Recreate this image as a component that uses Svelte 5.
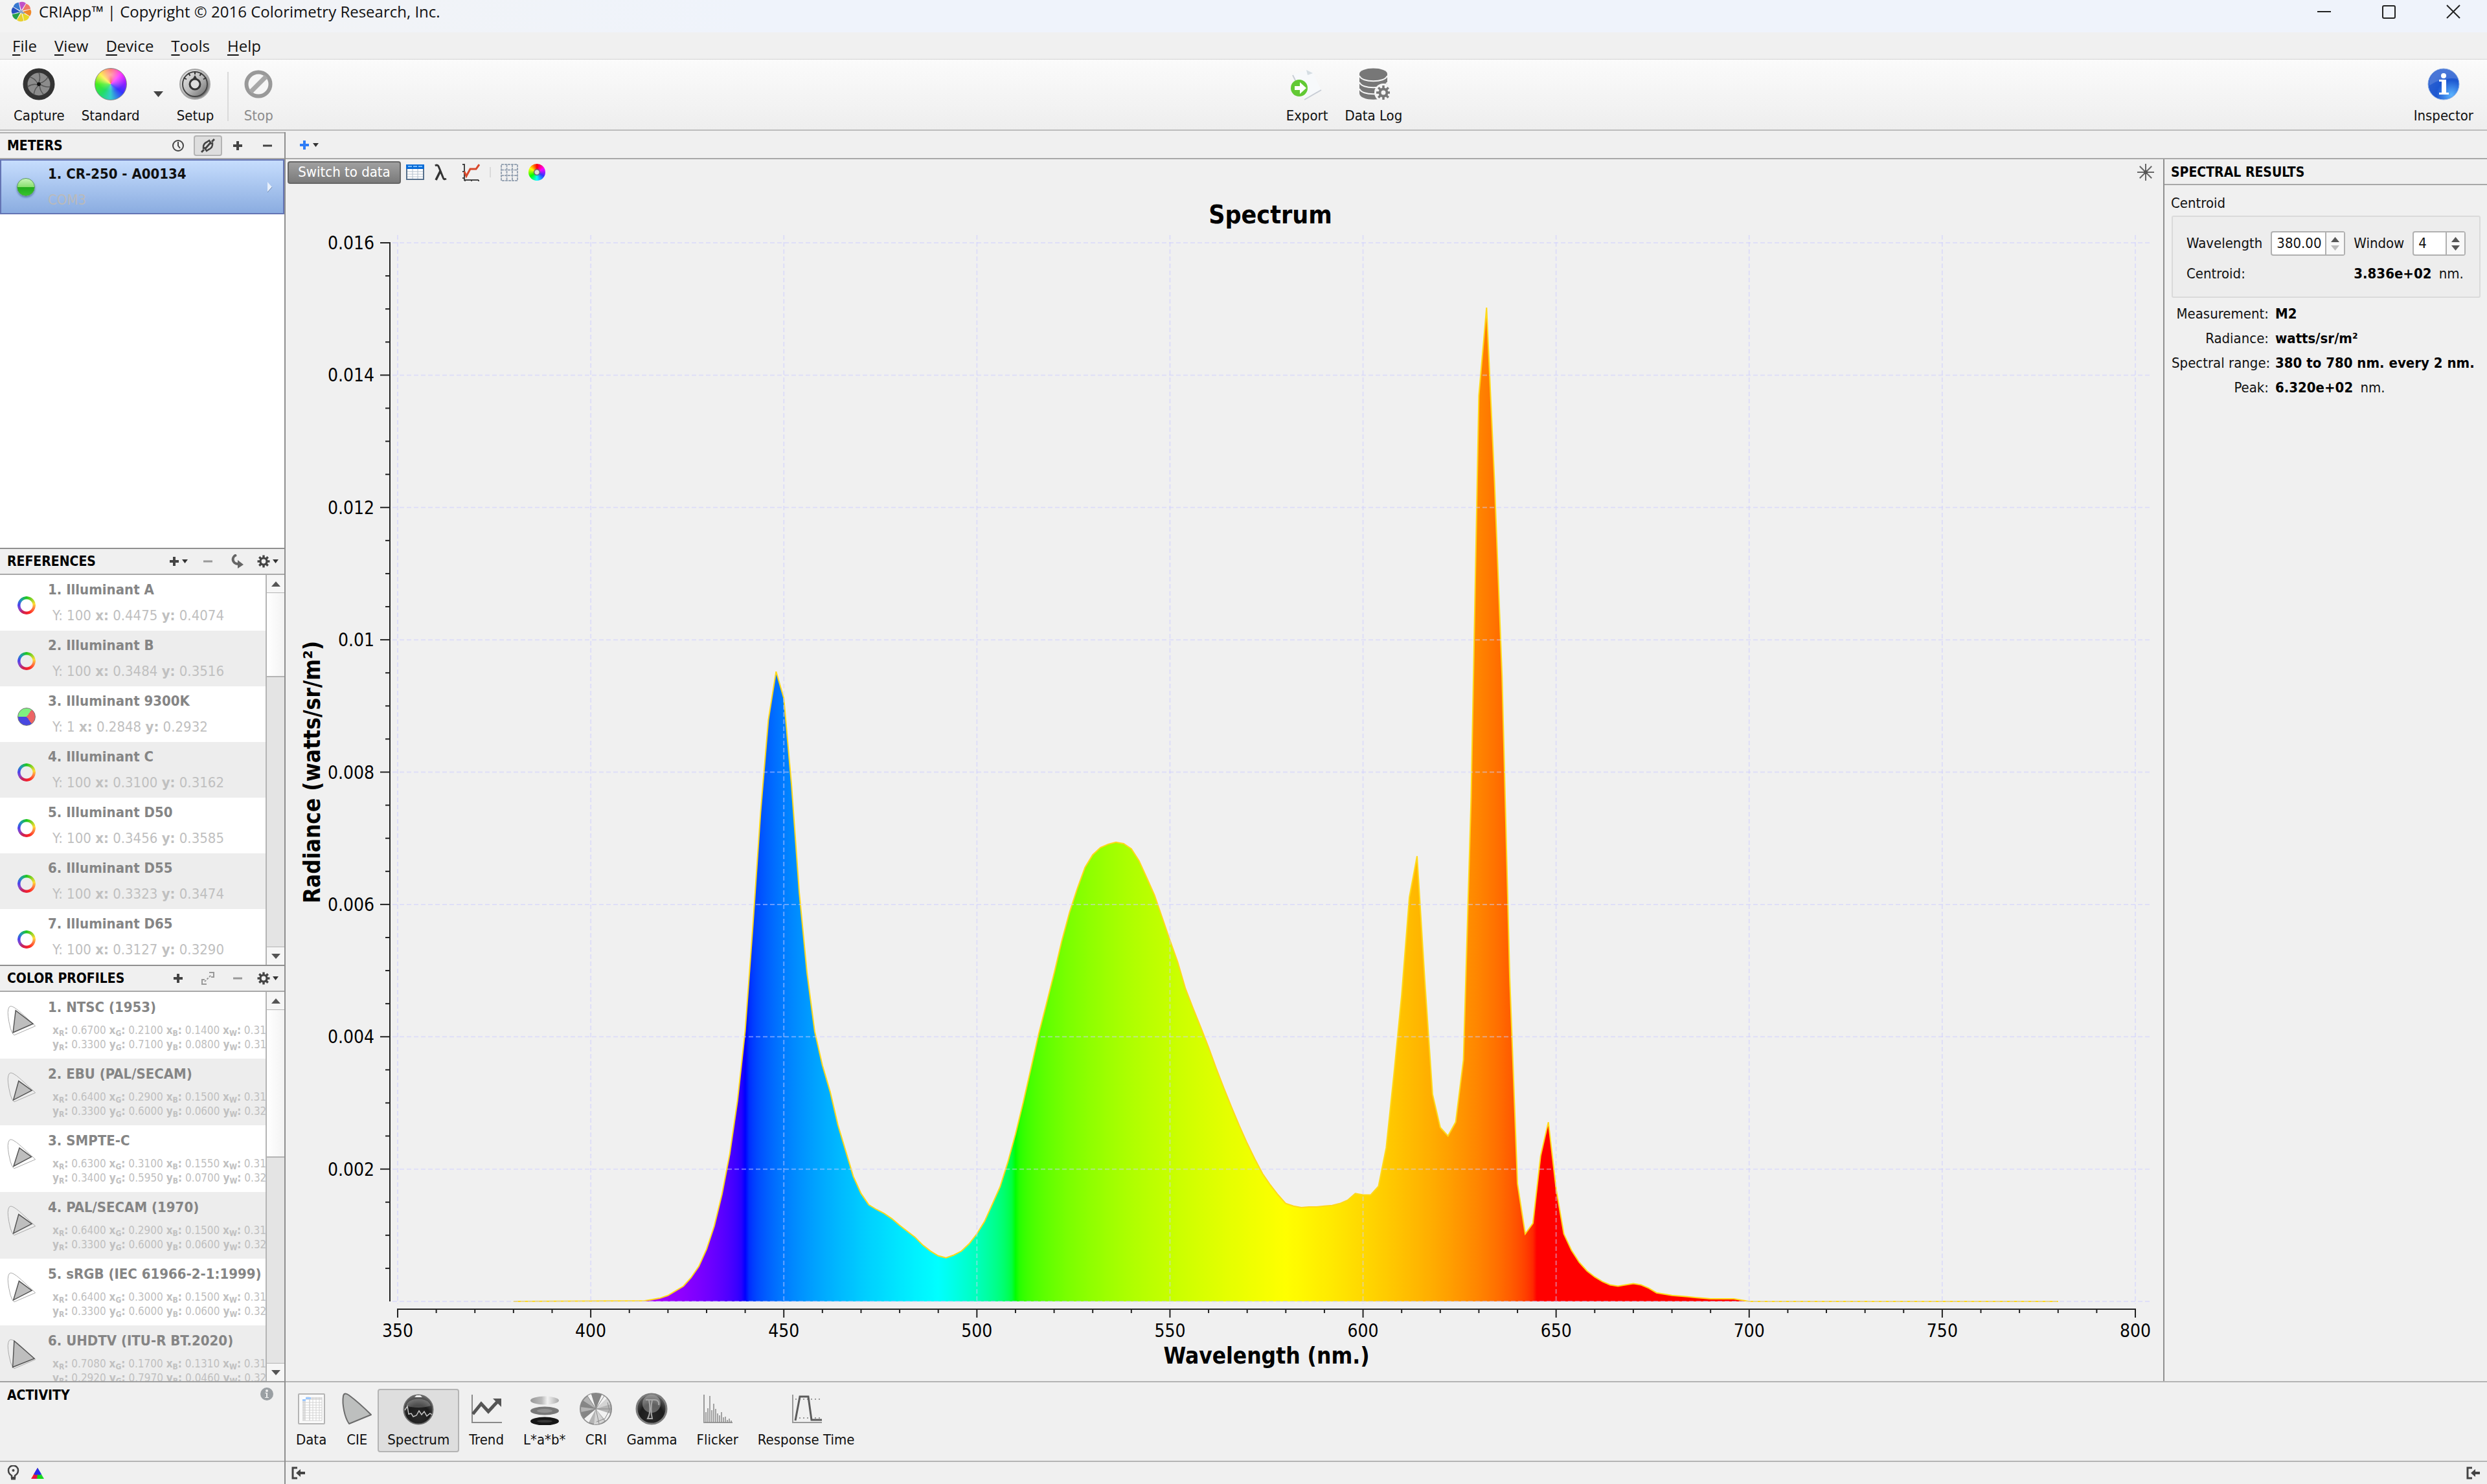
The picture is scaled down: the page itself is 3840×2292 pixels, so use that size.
<script lang="ts">
  type Row = { name: string; lum: string; x: string; y: string; mixed?: boolean };
  type Profile = { name: string; x: string[]; y: string[] };

  const menus = ['File', 'View', 'Device', 'Tools', 'Help'];

  const references: Row[] = [
    { name: 'Illuminant A', lum: '100', x: '0.4475', y: '0.4074' },
    { name: 'Illuminant B', lum: '100', x: '0.3484', y: '0.3516' },
    { name: 'Illuminant 9300K', lum: '1', x: '0.2848', y: '0.2932', mixed: true },
    { name: 'Illuminant C', lum: '100', x: '0.3100', y: '0.3162' },
    { name: 'Illuminant D50', lum: '100', x: '0.3456', y: '0.3585' },
    { name: 'Illuminant D55', lum: '100', x: '0.3323', y: '0.3474' },
    { name: 'Illuminant D65', lum: '100', x: '0.3127', y: '0.3290' },
  ];

  const profiles: Profile[] = [
    { name: 'NTSC (1953)', x: ['0.6700', '0.2100', '0.1400', '0.3101'], y: ['0.3300', '0.7100', '0.0800', '0.3162'] },
    { name: 'EBU (PAL/SECAM)', x: ['0.6400', '0.2900', '0.1500', '0.3127'], y: ['0.3300', '0.6000', '0.0600', '0.3290'] },
    { name: 'SMPTE-C', x: ['0.6300', '0.3100', '0.1550', '0.3127'], y: ['0.3400', '0.5950', '0.0700', '0.3290'] },
    { name: 'PAL/SECAM (1970)', x: ['0.6400', '0.2900', '0.1500', '0.3127'], y: ['0.3300', '0.6000', '0.0600', '0.3290'] },
    { name: 'sRGB (IEC 61966-2-1:1999)', x: ['0.6400', '0.3000', '0.1500', '0.3127'], y: ['0.3300', '0.6000', '0.0600', '0.3290'] },
    { name: 'UHDTV (ITU-R BT.2020)', x: ['0.7080', '0.1700', '0.1310', '0.3127'], y: ['0.2920', '0.7970', '0.0460', '0.3290'] },
  ];
  const primaries = ['R', 'G', 'B', 'W'];

  const views = ['Data', 'CIE', 'Spectrum', 'Trend', 'L*a*b*', 'CRI', 'Gamma', 'Flicker', 'Response Time'];
  let activeView = $state('Spectrum');
  let wavelength = $state('380.00');
  let windowSize = $state('4');

  // radiance in 1e-5 W/sr/m², 2 nm steps starting at 414 nm
  const samples = [
    1, 3, 5, 9, 16, 23, 36, 53, 79, 114, 162, 223, 303, 409, 568, 739, 879, 952, 912, 781,
    618, 497, 408, 357, 317, 267, 228, 189, 163, 146, 139, 133, 125, 115, 106, 97, 85, 76, 69, 66,
    70, 76, 87, 102, 121, 147, 173, 210, 253, 301, 352, 404, 450, 496, 545, 588, 624, 656, 675, 686,
    691, 694, 692, 684, 666, 640, 614, 580, 546, 513, 473, 443, 414, 384, 352, 322, 293, 265, 239, 215,
    193, 176, 161, 148, 144, 142, 143, 143, 144, 145, 148, 153, 163, 161, 161, 174, 232, 344, 463, 611,
    673, 484, 313, 263, 250, 271, 365, 763, 1369, 1502, 1245, 945, 489, 178, 102, 118, 220, 271, 170, 102,
    77, 59, 46, 37, 30, 25, 23, 25, 27, 25, 20, 13, 11, 9, 8, 7, 6, 5, 4, 4, 4, 4, 2,
  ];

  let w = $state(2899);
  let h = $state(1846);
  const left = 173;
  const right = 43;
  const top = 89;
  const bottom = 123;

  const px = (nm: number) => left + ((nm - 350) / 450) * (w - left - right);
  const py = (v: number) => h - bottom - (v / 1600) * (h - top - bottom);

  const curve = $derived(samples.map((v, i) => `${px(414 + i * 2).toFixed(1)},${py(v).toFixed(1)}`).join(' L'));
  const outline = $derived(`M${px(380)},${py(0)} L${curve} L${px(700)},${py(0)} L${px(780)},${py(0)}`);
  const area = $derived(`M${px(412)},${py(0)} L${curve} L${px(700)},${py(0)} Z`);

  const xTicks = Array.from({ length: 46 }, (_, i) => 350 + i * 10);
  const yTicks = Array.from({ length: 32 }, (_, i) => 50 + i * 50);
  const xMajor = xTicks.filter((t) => t % 50 === 0);
  const yMajor = [0, ...yTicks.filter((t) => t % 200 === 0)];

  function colorAt(nm: number) {
    const g = (v: number) => Math.round(255 * Math.pow(Math.min(1, Math.max(0, v)), 0.45));
    if (nm < 440) return `rgb(${g((440 - nm) / 60)},0,255)`;
    if (nm < 490) return `rgb(0,${g((nm - 440) / 50)},255)`;
    if (nm < 510) return `rgb(0,255,${g((510 - nm) / 20)})`;
    if (nm < 580) return `rgb(${g((nm - 510) / 70)},255,0)`;
    if (nm < 645) return `rgb(255,${g((645 - nm) / 65)},0)`;
    return 'rgb(255,0,0)';
  }
  const stops = Array.from({ length: 236 }, (_, i) => 410 + i);

  // spectral locus of the CIE 1931 diagram
  const locus = [
    [0.174, 0.005], [0.144, 0.03], [0.11, 0.087], [0.07, 0.2], [0.03, 0.4], [0.008, 0.55], [0.004, 0.66],
    [0.014, 0.75], [0.04, 0.812], [0.075, 0.834], [0.115, 0.826], [0.155, 0.806], [0.23, 0.754], [0.302, 0.692],
    [0.373, 0.624], [0.445, 0.554], [0.512, 0.487], [0.575, 0.424], [0.627, 0.372], [0.735, 0.265],
  ];
  const cie = (x: number, y: number) => `${(1 + x * 58).toFixed(1)},${(47 - y * 54).toFixed(1)}`;
  const locusPoints = locus.map(([x, y]) => cie(x, y)).join(' ');
  const gamut = (p: Profile) => [0, 1, 2].map((i) => cie(+p.x[i], +p.y[i])).join(' ');

  const rays = (n: number) => Array.from({ length: n }, (_, i) => (i * 360) / n);
</script>

{#snippet plus(color: string)}
  <svg width="16" height="16" viewBox="0 0 16 16"><path d="M8 1v14M1 8h14" stroke={color} stroke-width="4" /></svg>
{/snippet}

{#snippet minus(color: string)}
  <svg width="16" height="16" viewBox="0 0 16 16"><path d="M1 8h14" stroke={color} stroke-width="3" /></svg>
{/snippet}

{#snippet caret()}
  <svg width="9" height="6" viewBox="0 0 9 6"><path d="M0 0h9L4.500 6z" fill="#333" /></svg>
{/snippet}

{#snippet gear()}
  <svg width="20" height="20" viewBox="-10 -10 20 20">
    {#each rays(8) as a}<path d="M0-5V-9.500" stroke="#444" stroke-width="3.400" transform="rotate({a})" />{/each}
    <circle r="5" fill="none" stroke="#444" stroke-width="3.200" />
  </svg>
{/snippet}

{#snippet scrollbar(size: string)}
  <div class="scrollbar">
    <button class="arrow" aria-label="Scroll up"><svg width="14" height="8"><path d="M0 8h14L7 0z" fill="#555" /></svg></button>
    <div class="thumb {size}"></div>
    <div class="track"></div>
    <button class="arrow down" aria-label="Scroll down"><svg width="14" height="8"><path d="M0 0h14L7 8z" fill="#555" /></svg></button>
  </div>
{/snippet}

{#snippet dock()}
  <svg width="22" height="20" viewBox="0 0 22 20">
    <path d="M9 2H2v16h7" fill="none" stroke="#444" stroke-width="3" />
    <path d="M7 10l7-6v4h7v4h-7v4z" fill="#444" />
  </svg>
{/snippet}

{#snippet viewIcon(name: string)}
  <svg class="view-icon" viewBox="0 0 50 50">
    {#if name === 'Data'}
      <rect x="5" y="2" width="40" height="46" rx="1" fill="#fafafa" stroke="#b4b4b4" stroke-width="2" />
      <path d="M11 7h30v36H11z" fill="#fff" />
      <path d="M11 12h5v31h-5zM16 7h25v4H16z" fill="#dedede" />
      <path d="M17 7h5v36M22 7v36M27 7v36M32 7v36M37 7v36M11 15h30M11 19h30M11 23h30M11 27h30M11 31h30M11 35h30M11 39h30M11 43h30M41 7v36" fill="none" stroke="#d2d2d2" />
      <path d="M11 10h5v3h-5zM16 7h8v3h-8z" fill="#9cc8ff" />
    {:else if name === 'CIE'}
      <path d="M13 48C6 38 2 18 4 5C5 0 9 1 13 4C25 13 37 24 47 34Z" fill="#bdbfbe" stroke="#6b6b6b" stroke-width="2" stroke-linejoin="round" />
    {:else if name === 'Spectrum'}
      <circle cx="25" cy="26" r="22.500" fill="url(#ball)" stroke="#6a6a6a" stroke-width="2" />
      <path d="M6 20C10 6 40 6 44 20C34 24 16 24 6 20Z" fill="#fff" opacity=".22" />
      <path d="M19 7l3-3h6l3 3z" fill="#eee" />
      <path d="M4 27l4-6 2 12 4-1 3 5 5-2 4-7 4 6 4-5 4 7 5-4 3 2" fill="none" stroke="#c4c4c4" stroke-width="1.500" />
    {:else if name === 'Trend'}
      <path d="M3 3v43h46" fill="none" stroke="#8a8a8a" stroke-width="2" />
      <path d="M4 33L17 17L28 29L42 14" fill="none" stroke="#555" stroke-width="5" />
      <path d="M35 9h13v13z" fill="#555" />
    {:else if name === 'L*a*b*'}
      <ellipse cx="25" cy="12" rx="22" ry="6.500" fill="url(#shine)" />
      <ellipse cx="25" cy="28" rx="22" ry="6.500" fill="#777" /><ellipse cx="25" cy="28" rx="12" ry="3" fill="#929292" />
      <ellipse cx="25" cy="44" rx="22" ry="6.500" fill="#161616" /><ellipse cx="25" cy="44" rx="12" ry="2" fill="#383838" />
    {:else if name === 'CRI'}
      <circle cx="25" cy="25" r="24" fill="#b4b4b4" stroke="#8c8c8c" stroke-width="2" />
      <path d="M25 25L12 5A24 24 0 0 1 18 2Z M25 25L34 3A24 24 0 0 1 42 9Z M25 25L47 32A24 24 0 0 1 40 43Z M25 25L14 46A24 24 0 0 1 7 40Z" fill="#f2f2f2" />
      <path d="M25 25L18 2A24 24 0 0 1 34 3Z M25 25L1 22A24 24 0 0 1 5 12Z M25 25L7 40A24 24 0 0 1 2 30Z" fill="#858585" />
      <path d="M25 25L38 44A24 24 0 0 1 22 49Z M25 25L42 9A24 24 0 0 1 47 18Z" fill="#d4d4d4" />
      <path d="M25 25L12 5M25 25L3 15M25 25L49 25M25 25L30 48M25 25L38 5M25 25L2 32M43 15l3 12-7 13-13 5" fill="none" stroke="#8a8a8a" />
    {:else if name === 'Gamma'}
      <circle cx="25" cy="25" r="23" fill="url(#ball)" stroke="#7c7c7c" stroke-width="3" />
      <circle cx="25" cy="17" r="14" fill="#fff" opacity=".3" />
      <path d="M16 11h14c5 0 7 4 6 8M21 11c2 10 2 22-2 29h7c-2-9-2-20 0-29" fill="none" stroke="#a8a8a8" stroke-width="2" />
    {:else if name === 'Flicker'}
      <path d="M4 3v43h44" fill="none" stroke="#9a9a9a" stroke-width="2" />
      <path d="M7 46V30M10 46V24M13 46V5M16 46V27M19 46V17M22 46V25M25 46V32M28 46V35M31 46V30M34 46V38M37 46V37M40 46V42M43 46V40M46 46V43" stroke="#888" stroke-width="1.500" />
    {:else}
      <path d="M4 3v43h45" fill="none" stroke="#999" stroke-width="2" />
      <path d="M8 10h42M8 39h42" stroke="#999" stroke-width="2" stroke-dasharray="2 4" />
      <path d="M8 43L15 6H28L33 42H49" fill="none" stroke="#5c5c5c" stroke-width="3" />
    {/if}
  </svg>
{/snippet}

<div class="app">
  <header class="titlebar">
    <svg width="32" height="32" viewBox="-16 -16 32 32">
      {#each ['#c050c8', '#f07868', '#f08828', '#e8d828', '#e8d030', '#28a048', '#2850c0', '#3878d0'] as c, i}
        <path d="M0-2L-3.500-14Q2-17 7-13Z" fill={c} transform="rotate({i * 45})" />
      {/each}
      <path d="M-5 1h4v-3M1-2v4h4" fill="none" stroke="#6a8fc0" stroke-width="1.500" />
    </svg>
    <span class="caption">CRIApp™ | Copyright © 2016 Colorimetry Research, Inc.</span>
    <button aria-label="Minimize"><svg width="24" height="24"><path d="M2 12h21" stroke="#222" stroke-width="2" /></svg></button>
    <button aria-label="Maximize"><svg width="24" height="24"><rect x="3" y="3" width="19" height="19" rx="2" fill="none" stroke="#222" stroke-width="2" /></svg></button>
    <button aria-label="Close"><svg width="24" height="24"><path d="M2 2l20 20M22 2L2 22" stroke="#222" stroke-width="2" /></svg></button>
  </header>

  <nav class="menubar">
    {#each menus as m}<button><u>{m[0]}</u>{m.slice(1)}</button>{/each}
  </nav>

  <div class="toolbar">
    <div class="tools">
      <button class="tool">
        <svg viewBox="-25 -25 50 50">
          <circle r="21" fill="#8c8c8c" stroke="#333" stroke-width="7" />
          {#each rays(7) as a}<path d="M0-3Q3-10 0-18" fill="none" stroke="#555" stroke-width="1.500" transform="rotate({a})" />{/each}
          <circle r="3" fill="#111" />
        </svg>
        Capture
      </button>
      <div class="split">
        <button class="tool"><span class="wheel big"></span>Standard</button>
        <button class="drop" aria-label="Standard modes"><svg width="15" height="9"><path d="M0 0h15L7.500 9z" fill="#444" /></svg></button>
      </div>
      <button class="tool">
        <svg viewBox="-25 -25 50 50">
          <circle r="23" fill="url(#metal)" stroke="#a5a5a5" stroke-width="2" />
          <circle r="19" fill="none" stroke="#444" stroke-width="2" />
          {#each [-60, -30, 0, 30, 60] as a}<path d="M0-20v5" stroke="#333" stroke-width="2" transform="rotate({a})" />{/each}
          <circle r="8" fill="#ddd" stroke="#333" stroke-width="3" />
          <path d="M-3-9L0-14L3-9z" fill="#333" />
        </svg>
        Setup
      </button>
      <i class="sep"></i>
      <button class="tool" disabled>
        <svg viewBox="-25 -25 50 50"><circle r="18.500" fill="#f6f6f6" stroke="#999" stroke-width="6" /><path d="M-12 12L12-12" stroke="#a8a8a8" stroke-width="7" /></svg>
        Stop
      </button>
    </div>
    <div class="tools">
      <button class="tool">
        <svg viewBox="0 0 50 50">
          <path d="M3 11L24 3L34 7L47 34L21 49Z" fill="#f7f9fb" />
          <path d="M24 3l10 5-8 3z" fill="#d5dde3" />
          <path d="M3 11l6 12M21 49l26-15" stroke="#c9ced6" stroke-width="2" />
          <circle cx="13" cy="31" r="13" fill="#62c934" />
          <path d="M6 28h8v-6l10 9-10 9v-6H6z" fill="#fff" />
        </svg>
        Export
      </button>
      <button class="tool">
        <svg viewBox="0 0 50 50">
          <path d="M3 9v30c0 13 43 13 43 0V9z" fill="#777" />
          <ellipse cx="24.500" cy="9" rx="21.500" ry="8.500" fill="#777" />
          <path d="M3 12c3 11 40 11 43 0M3 22c3 11 40 11 43 0M3 32c3 11 40 11 43 0" fill="none" stroke="#f6f6f6" stroke-width="2" />
          <g transform="translate(40 38)">
            <circle r="14" fill="#f4f4f4" />
            {#each rays(8) as a}<path d="M0-5V-11" stroke="#777" stroke-width="3.500" transform="rotate({a})" />{/each}
            <circle r="5.500" fill="#f4f4f4" stroke="#777" stroke-width="4" />
          </g>
        </svg>
        Data Log
      </button>
    </div>
    <div class="tools">
      <button class="tool">
        <svg viewBox="-25 -25 50 50">
          <circle r="24" fill="url(#info)" stroke="#8fb0e4" />
          <path d="M-22-6A23 23 0 0 1 22-8Q0-12-22 2z" fill="#fff" opacity=".15" />
          <circle cy="-13" r="4" fill="#fff" />
          <path d="M-7-7H4V13H8V16H-7V13H-3V-4H-7z" fill="#fff" />
        </svg>
        Inspector
      </button>
    </div>
  </div>

  <main>
    <aside class="sidebar">
      <section class="panel meters">
        <div class="panel-head">
          <h2>METERS</h2>
          <button aria-label="Schedule"><svg width="20" height="20" viewBox="0 0 20 20"><circle cx="10" cy="10" r="8" fill="none" stroke="#444" stroke-width="2" /><path d="M10 4v6l3 4" fill="none" stroke="#444" stroke-width="2" /></svg></button>
          <button class="on" aria-label="Connect"><svg width="22" height="22" viewBox="0 0 22 22"><path d="M1 21L5 17M17 5L21 1" stroke="#444" stroke-width="3" /><path d="M4 15Q3 8 10 5L13 3L15 6L8 14ZM18 7Q19 14 12 17L9 19L7 16L14 8Z" fill="none" stroke="#444" stroke-width="2.500" /></svg></button>
          <button aria-label="Add meter">{@render plus('#444')}</button>
          <button aria-label="Remove meter">{@render minus('#444')}</button>
        </div>
        <div class="meter">
          <span class="led"></span>
          <div class="meter-text"><b>1. CR-250 - A00134</b><span>COM3</span></div>
          <svg width="8" height="16"><path d="M0 0l7 8-7 8z" fill="#e8f0fb" /><path d="M0 16l7-8" stroke="#6e86ad" /></svg>
        </div>
      </section>

      <section class="panel">
        <div class="panel-head">
          <h2>REFERENCES</h2>
          <button aria-label="Add reference">{@render plus('#444')}{@render caret()}</button>
          <button aria-label="Remove reference">{@render minus('#999')}</button>
          <button aria-label="Assign"><svg width="20" height="22" viewBox="0 0 20 22"><path d="M8 1C0 4 1 15 11 15" fill="none" stroke="#666" stroke-width="4" /><path d="M10 9l9 7-9 6z" fill="#666" /></svg></button>
          <button aria-label="Reference options">{@render gear()}{@render caret()}</button>
        </div>
        <div class="list-wrap">
          <ul class="list">
            {#each references as r, i}
              <li class="ref">
                <span class="ring" class:mixed={r.mixed}></span>
                <div>
                  <b>{i + 1}. {r.name}</b>
                  <p>Y: {r.lum} <b>x:</b> {r.x} <b>y:</b> {r.y}</p>
                </div>
              </li>
            {/each}
          </ul>
          {@render scrollbar('short')}
        </div>
      </section>

      <section class="panel">
        <div class="panel-head">
          <h2>COLOR PROFILES</h2>
          <button aria-label="Add profile">{@render plus('#444')}</button>
          <button aria-label="Expand"><svg width="20" height="20" viewBox="0 0 20 20" fill="none" stroke="#999" stroke-width="2"><path d="M12 1h7v7h-4M8 19H1v-7h4" /><path d="M5 15L15 5" stroke-dasharray="3 2" /></svg></button>
          <button aria-label="Remove profile">{@render minus('#999')}</button>
          <button aria-label="Profile options">{@render gear()}{@render caret()}</button>
        </div>
        <div class="list-wrap profiles">
          <ul class="list">
            {#each profiles as p, i}
              <li class="profile">
                <svg width="46" height="48">
                  <polygon points={locusPoints} fill={i % 2 ? 'none' : '#fff'} stroke="#aaa" />
                  <polygon points={gamut(p)} fill="#bebebe" stroke="#555" stroke-width="1.500" />
                </svg>
                <div>
                  <b>{i + 1}. {p.name}</b>
                  <p>{#each primaries as c, k}<b>x<small>{c}</small>:</b> {p.x[k]}{' '}{/each}</p>
                  <p>{#each primaries as c, k}<b>y<small>{c}</small>:</b> {p.y[k]}{' '}{/each}</p>
                </div>
              </li>
            {/each}
          </ul>
          {@render scrollbar('long')}
        </div>
      </section>

      <section class="activity">
        <h2>ACTIVITY</h2>
        <svg width="22" height="22" viewBox="0 0 22 22"><circle cx="11" cy="11" r="10" fill="#9a9fa3" /><circle cx="11" cy="6" r="2" fill="#eee" /><path d="M8 9h4v7h2v1H8v-1h2v-6H8z" fill="#eee" /></svg>
      </section>

      <div class="status">
        <svg width="20" height="24" viewBox="0 0 20 24"><path d="M7 16Q2 13 2 8A7 7 0 0 1 17 8Q17 13 12 16V19H7Z" fill="none" stroke="#444" stroke-width="2.500" /><path d="M6 21h7" stroke="#444" stroke-width="3" /><circle cx="9.500" cy="8" r="2" fill="#444" /></svg>
        <svg width="20" height="17" viewBox="0 0 20 17"><path d="M10 0L0 17L10 12z" fill="#f02020" /><path d="M10 0L20 17L10 12z" fill="#20d030" /><path d="M10 0L4 10L10 12L16 10z" fill="#2828f0" /><path d="M0 17L10 10L14 17z" fill="#e01050" /><path d="M20 17L10 10L9 17z" fill="#10e010" /></svg>
      </div>
    </aside>

    <div class="workspace">
      <div class="tabs"><button aria-label="Add tab">{@render plus('#2f7df6')}{@render caret()}</button></div>

      <div class="content">
        <section class="plot">
          <div class="plot-bar">
            <button class="switch">Switch to data</button>
            <button class="mini" aria-label="Table">
              <svg width="28" height="24" viewBox="0 0 28 24"><rect x="1" y="1" width="26" height="22" fill="#fff" stroke="#56708c" stroke-width="2" /><path d="M0 0h28v7H0z" fill="#0a6bd6" /><path d="M3 3h6M11 3h6M19 3h6" stroke="#7cc0ff" stroke-width="2" /><path d="M2 11h24M2 15h24M2 19h24M10 7v15M18 7v15" stroke="#b4c0cc" /></svg>
            </button>
            <button class="mini" aria-label="Wavelength">
              <svg width="20" height="26" viewBox="0 0 20 26"><path d="M2 3Q6 0 8 6L14 21Q15 25 19 23" fill="none" stroke="#333" stroke-width="3" /><path d="M10 11L3 25" stroke="#333" stroke-width="3.500" /></svg>
            </button>
            <button class="mini" aria-label="Curve">
              <svg width="28" height="28" viewBox="0 0 28 28"><path d="M1 2h3v24h22M1 13h3M1 23h3M5 28v-2M15 28v-2M26 28v-2" fill="none" stroke="#444" stroke-width="2" /><path d="M4 13L7 20L13 9H22L27 2" fill="none" stroke="#d8482a" stroke-width="3" /></svg>
            </button>
            <i class="sep"></i>
            <button class="mini" aria-label="Grid">
              <svg width="27" height="27" viewBox="0 0 27 27"><path d="M1 1h25v25H1zM9.500 1v25M18 1v25M1 9.500h25M1 18h25" fill="none" stroke="#9aa6b5" stroke-width="2" stroke-dasharray="4 1" /></svg>
            </button>
            <button class="mini" aria-label="Colors"><span class="wheel small"></span></button>
            <button class="mini burst" aria-label="Fit">
              <svg width="26" height="26" viewBox="-13 -13 26 26">{#each rays(8) as a}<path d="M0 0V-13" stroke="#666" stroke-width="2" transform="rotate({a})" />{/each}<circle r="3" fill="#555" /></svg>
            </button>
          </div>

          <div class="chart" bind:clientWidth={w} bind:clientHeight={h}>
            <svg viewBox="0 0 {w} {h}" role="img" aria-label="Spectrum">
              <defs>
                <linearGradient id="spectrum" gradientUnits="userSpaceOnUse" x1={px(410)} x2={px(645)}>
                  {#each stops as nm}<stop offset={(nm - 410) / 235} stop-color={colorAt(nm)} />{/each}
                </linearGradient>
              </defs>
              <path d={area} fill="url(#spectrum)" />
              <path d={outline} class="curve" />

              {#each xMajor as t}<line class="grid" x1={px(t)} x2={px(t)} y1={top - 12} y2={h - bottom + 4} />{/each}
              {#each yMajor as t}<line class="grid" x1={left - 8} x2={w - 21} y1={py(t)} y2={py(t)} />{/each}

              <path class="axis" d="M{left - 12},{py(1600) - 1} V{py(0)}" />
              {#each yTicks as t}<line class="axis" x1={left - (t % 200 ? 19 : 27)} x2={left - 12} y1={py(t)} y2={py(t)} />{/each}
              {#each yMajor.slice(1) as t}<text class="tick" x={left - 36} y={py(t) + 10} text-anchor="end">{t / 100000}</text>{/each}

              <path class="axis" d="M{px(350) - 1},{py(0) + 12} H{px(800) + 1}" />
              {#each xTicks as t}<line class="axis" x1={px(t)} x2={px(t)} y1={py(0) + 12} y2={py(0) + (t % 50 ? 18 : 25)} />{/each}
              {#each xMajor as t}<text class="tick" x={px(t)} y={py(0) + 55} text-anchor="middle">{t}</text>{/each}

              <text class="title" x={px(576)} y={top - 30} text-anchor="middle">Spectrum</text>
              <text class="label" x={px(575)} y={py(0) + 96} text-anchor="middle">Wavelength (nm.)</text>
              <text class="label" transform="translate(53 {py(800)}) rotate(-90)" text-anchor="middle">Radiance (watts/sr/m²)</text>
            </svg>
          </div>
        </section>

        <aside class="inspector">
          <h2>SPECTRAL RESULTS</h2>
          <h3>Centroid</h3>
          <div class="group">
            <label for="wavelength">Wavelength</label>
            <div class="spin">
              <input id="wavelength" type="text" bind:value={wavelength} />
              <div class="steps">
                <button aria-label="Increase wavelength"><svg width="13" height="8"><path d="M0 8h13L6.500 0z" fill="#555" /></svg></button>
                <button aria-label="Decrease wavelength"><svg width="13" height="8"><path d="M0 0h13L6.500 8z" fill="#bbb" /></svg></button>
              </div>
            </div>
            <label for="window">Window</label>
            <div class="spin">
              <input id="window" type="text" bind:value={windowSize} />
              <div class="steps">
                <button aria-label="Increase window"><svg width="13" height="8"><path d="M0 8h13L6.500 0z" fill="#555" /></svg></button>
                <button aria-label="Decrease window"><svg width="13" height="8"><path d="M0 0h13L6.500 8z" fill="#555" /></svg></button>
              </div>
            </div>
            <span class="centroid">Centroid:</span>
            <span class="value"><b>3.836e+02</b> nm.</span>
          </div>
          <dl>
            <dt>Measurement:</dt><dd><b>M2</b></dd>
            <dt>Radiance:</dt><dd><b>watts/sr/m²</b></dd>
            <dt>Spectral range:</dt><dd><b>380 to 780 nm. every 2 nm.</b></dd>
            <dt>Peak:</dt><dd><b>6.320e+02</b> nm.</dd>
          </dl>
        </aside>
      </div>

      <div class="views">
        {#each views as v}
          <button class:active={v === activeView} onclick={() => (activeView = v)}>{@render viewIcon(v)}{v}</button>
        {/each}
      </div>

      <div class="status ends">{@render dock()}{@render dock()}</div>
    </div>
  </main>

  <svg class="defs" width="0" height="0">
    <defs>
      <radialGradient id="ball" cx=".5" cy=".75" r=".8"><stop offset="0" stop-color="#2a2a2a" /><stop offset=".5" stop-color="#1c1c1c" /><stop offset="1" stop-color="#777" /></radialGradient>
      <linearGradient id="shine"><stop offset="0" stop-color="#999" /><stop offset=".4" stop-color="#bbb" /><stop offset=".6" stop-color="#f2f2f2" /><stop offset="1" stop-color="#aaa" /></linearGradient>
      <linearGradient id="metal" x1="0" y1="0" x2="1" y2="1"><stop offset="0" stop-color="#f2f2f2" /><stop offset=".5" stop-color="#bbb" /><stop offset="1" stop-color="#555" /></linearGradient>
      <radialGradient id="info" cx=".75" cy=".85" r=".8"><stop offset="0" stop-color="#5cb4ff" /><stop offset=".6" stop-color="#1d57d0" /><stop offset="1" stop-color="#2a5fd0" /></radialGradient>
    </defs>
  </svg>
</div>

<style>
  :global(body) {
    margin: 0;
    background: #f0f0f0;
  }

  .app {
    display: flex;
    flex-direction: column;
    height: 100vh;
    overflow: hidden;
    background: #f0f0f0;
    color: #111;
    font: 22px/26px 'DejaVu Sans Condensed', 'DejaVu Sans', sans-serif;
  }

  .app * {
    box-sizing: border-box;
  }

  button {
    display: flex;
    align-items: center;
    justify-content: center;
    padding: 0;
    border: none;
    background: none;
    color: inherit;
    font: inherit;
  }

  svg {
    display: block;
    flex: none;
  }

  h2,
  h3,
  p,
  ul,
  dl,
  dd {
    margin: 0;
    padding: 0;
  }

  h2 {
    font-size: 21px;
    font-weight: bold;
    color: #000;
  }

  .defs {
    position: absolute;
  }

  .titlebar {
    display: flex;
    flex: none;
    height: 50px;
    padding: 0 2px 14px 17px;
    background: linear-gradient(90deg, #f3f3f3, #eff3fb 30%);
    align-items: center;
    font: 24px/32px 'Open Sans', sans-serif;
  }

  .titlebar button {
    width: 100px;
  }

  .caption {
    flex: 1;
    padding-left: 11px;
  }

  .menubar {
    display: flex;
    flex: none;
    gap: 27px;
    height: 42px;
    padding: 0 19px;
    border-bottom: 1px solid #d4d4d4;
    font: 24px/32px 'Open Sans', sans-serif;
  }

  .menubar u {
    text-underline-offset: 4px;
  }

  .toolbar {
    display: flex;
    flex: none;
    justify-content: space-between;
    height: 110px;
    margin-bottom: 2px;
    padding: 5px 16px 0;
    border-bottom: 2px solid #bcbcbc;
    background: linear-gradient(#fbfbfb, #eeeeee);
  }

  .tools {
    display: flex;
    gap: 16px;
    align-items: center;
  }

  .tool {
    flex-direction: column;
    gap: 11px;
    padding: 0 5px;
  }

  .tool svg {
    width: 50px;
    height: 50px;
  }

  .tool:disabled {
    color: #8c8c8c;
  }

  .split {
    display: flex;
    gap: 16px;
  }

  .drop {
    padding-bottom: 6px;
  }

  .sep {
    width: 2px;
    height: 76px;
    background: #dadada;
  }

  .wheel {
    border-radius: 50%;
    background:
      radial-gradient(circle at 50% 20%, rgba(255, 255, 255, 0.6), transparent 55%),
      conic-gradient(#f22, #f0f 12%, #82f 25%, #33f 35%, #3cc 50%, #2d6 62%, #4e2 75%, #fe2 87%, #f22);
  }

  .wheel.big {
    width: 50px;
    height: 50px;
    border: 1px solid #888;
  }

  .wheel.small {
    width: 26px;
    height: 26px;
    background:
      radial-gradient(circle, #ddd 0 3px, #667 4px, transparent 6px),
      conic-gradient(red, #f0f 17%, #33f 33%, #0ff 50%, #0f0 66%, #ff0 83%, red);
  }

  main {
    display: flex;
    flex: 1;
    min-height: 0;
  }

  .sidebar {
    display: flex;
    flex: none;
    flex-direction: column;
    width: 441px;
    border-right: 2px solid #8f8f8f;
  }

  .panel {
    flex: none;
    border-top: 2px solid #8f8f8f;
    background: #fff;
  }

  .panel.meters {
    flex: 1;
    border-top-color: #b0b0b0;
  }

  .panel-head {
    display: flex;
    gap: 2px;
    align-items: center;
    height: 40px;
    padding: 0 4px 0 11px;
    border-bottom: 2px solid #a8a8a8;
    background: #f0f0f0;
  }

  .panel-head h2 {
    flex: 1;
  }

  .panel-head button {
    gap: 4px;
    width: 44px;
    height: 32px;
  }

  .panel-head .on {
    border: 2px solid #b4b4b4;
    border-radius: 4px;
    background: #dedede;
  }

  .meter {
    display: flex;
    align-items: center;
    height: 85px;
    padding: 0 16px 0 24px;
    border: 2px solid #6474b4;
    background: linear-gradient(#c6ddfd, #8aace0);
  }

  .led {
    width: 28px;
    height: 28px;
    border: 1px solid #5a9a5a;
    border-radius: 50%;
    background: linear-gradient(#c8f5b8, #8be070 48%, #22ac1c 52%, #36c42c);
    box-shadow: 0 2px 3px #5d7fae;
  }

  .meter-text {
    display: flex;
    flex: 1;
    flex-direction: column;
    gap: 14px;
    padding-left: 20px;
  }

  .meter-text span {
    color: #bababa;
  }

  .list-wrap {
    display: flex;
    height: 602px;
  }

  .list-wrap.profiles {
    height: 601px;
  }

  .list {
    flex: 1;
    overflow: hidden;
    list-style: none;
    white-space: nowrap;
    color: #858585;
  }

  .list li {
    display: flex;
    overflow: hidden;
  }

  .list li:nth-child(even) {
    background: #ededed;
  }

  .list p {
    padding-left: 7px;
    color: #c0c0c0;
  }

  .ref {
    height: 86px;
    padding: 10px 0 0 27px;
  }

  .ref p {
    padding-top: 14px;
  }

  .ring {
    flex: none;
    width: 28px;
    height: 28px;
    margin: 23px 19px 0 0;
    border-radius: 50%;
    background: conic-gradient(#1cc81c, #fd3 22%, #f84 30%, #f22 45%, #c25 58%, #84c 68%, #44e 77%, #29b 87%, #1cc81c);
    mask: radial-gradient(circle, transparent 9px, #000 10px);
  }

  .ring.mixed {
    border: 1px solid #777;
    background: conic-gradient(#7ff07f 0 10%, #ec6464 10% 40%, #4848e0 40% 75%, #7ff07f 75%);
    mask: none;
  }

  .profile {
    height: 103px;
    padding: 11px 0 0 11px;
  }

  .profile svg {
    margin: 9px 17px 0 0;
  }

  .profile p {
    font-size: 17px;
    line-height: 22px;
  }

  .profile p:first-of-type {
    padding-top: 11px;
  }

  small {
    position: relative;
    top: 3px;
    font-size: 12px;
    line-height: 1px;
  }

  .scrollbar {
    display: flex;
    flex: none;
    flex-direction: column;
    width: 29px;
    border-left: 2px solid #b4b4b4;
    background: #e4e4e4;
  }

  .arrow {
    height: 28px;
    border-bottom: 1px solid #b4b4b4;
    background: #f6f6f6;
  }

  .arrow.down {
    border-top: 1px solid #b4b4b4;
    border-bottom: none;
  }

  .thumb {
    border-bottom: 2px solid #b4b4b4;
    background: linear-gradient(90deg, #fff, #f3f3f3);
  }

  .thumb.short {
    flex: 128;
  }

  .thumb.short + .track {
    flex: 418;
  }

  .thumb.long {
    flex: 227;
  }

  .thumb.long + .track {
    flex: 318;
  }

  .activity {
    display: flex;
    flex: none;
    justify-content: space-between;
    height: 123px;
    padding: 7px 16px 0 11px;
    border-top: 2px solid #a0a0a0;
  }

  .status {
    display: flex;
    flex: none;
    gap: 17px;
    align-items: center;
    height: 36px;
    padding: 0 11px;
    border-top: 2px solid #b4b4b4;
  }

  .status.ends {
    justify-content: space-between;
    padding: 0 10px 0 9px;
  }

  .workspace {
    display: flex;
    flex: 1;
    flex-direction: column;
    min-width: 0;
  }

  .tabs {
    display: flex;
    flex: none;
    height: 42px;
    padding: 0 21px;
    border-bottom: 2px solid #a8a8a8;
  }

  .tabs button {
    gap: 5px;
  }

  .content {
    display: flex;
    flex: 1;
    min-height: 0;
  }

  .plot {
    display: flex;
    flex: 1;
    flex-direction: column;
    min-width: 0;
  }

  .plot-bar {
    display: flex;
    flex: none;
    gap: 15px;
    align-items: center;
    height: 40px;
    padding: 0 12px 0 3px;
  }

  .plot-bar .sep {
    height: 16px;
  }

  .mini {
    justify-content: flex-start;
    min-width: 28px;
  }

  .switch {
    width: 175px;
    height: 35px;
    margin-right: -7px;
    border: 2px solid #666;
    border-radius: 4px;
    background: linear-gradient(#a0a0a0, #7a7a7a);
    color: #fff;
  }

  .burst {
    margin-left: auto;
  }

  .chart {
    flex: 1;
    min-height: 0;
    overflow: hidden;
  }

  .chart svg {
    width: 100%;
    height: 100%;
  }

  .curve {
    fill: none;
    stroke: #ffd91a;
    stroke-width: 2;
  }

  .grid {
    stroke: rgba(205, 205, 255, 0.5);
    stroke-width: 2;
    stroke-dasharray: 7 4;
  }

  .axis {
    fill: none;
    stroke: #222;
    stroke-width: 2;
  }

  .tick {
    font-size: 28px;
  }

  .title {
    font-size: 39px;
    font-weight: bold;
    fill: #000;
  }

  .label {
    font-size: 35px;
    font-weight: bold;
    fill: #000;
  }

  .inspector {
    flex: none;
    width: 500px;
    border-left: 2px solid #8f8f8f;
  }

  .inspector h2 {
    height: 40px;
    padding: 7px 10px 0;
    border-bottom: 2px solid #a8a8a8;
  }

  .inspector h3 {
    padding: 15px 10px 6px;
    font-size: 22px;
    font-weight: normal;
  }

  .group {
    display: grid;
    grid-template-columns: auto 115px 1fr 82px;
    gap: 15px 13px;
    align-items: center;
    margin: 0 10px 0 11px;
    padding: 22px 21px;
    border: 2px solid #dadada;
    border-radius: 3px;
    background: #ededed;
  }

  .spin {
    display: flex;
    height: 38px;
    border: 2px solid #b0b0b0;
    border-radius: 4px;
    background: #fff;
  }

  .spin input {
    flex: 1;
    width: 0;
    padding: 0 0 0 7px;
    border: none;
    background: none;
    color: inherit;
    font: inherit;
  }

  .steps {
    display: flex;
    flex-direction: column;
    gap: 5px;
    justify-content: center;
    width: 29px;
    border-left: 2px solid #b0b0b0;
    background: #f8f8f8;
  }

  .centroid {
    grid-column: span 2;
  }

  .value {
    grid-column: span 2;
    white-space: nowrap;
  }

  .value b,
  dd b {
    margin-right: 5px;
    color: #000;
  }

  dl {
    display: grid;
    grid-template-columns: 150px 1fr;
    gap: 0 10px;
    margin: 6px 0 0 11px;
    line-height: 38px;
    white-space: nowrap;
  }

  dt {
    text-align: right;
  }

  .views {
    display: flex;
    flex: none;
    align-items: center;
    height: 123px;
    padding: 0 0 4px 1px;
    border-top: 2px solid #b4b4b4;
  }

  .views button {
    flex-direction: column;
    gap: 10px;
    height: 98px;
    padding: 0 13px;
    border: 2px solid transparent;
    border-radius: 4px;
  }

  .views .active {
    border-color: #b4b4b4;
    background: #dedede;
  }

  .view-icon {
    width: 50px;
    height: 50px;
    margin: 0 -8px;
  }
</style>
